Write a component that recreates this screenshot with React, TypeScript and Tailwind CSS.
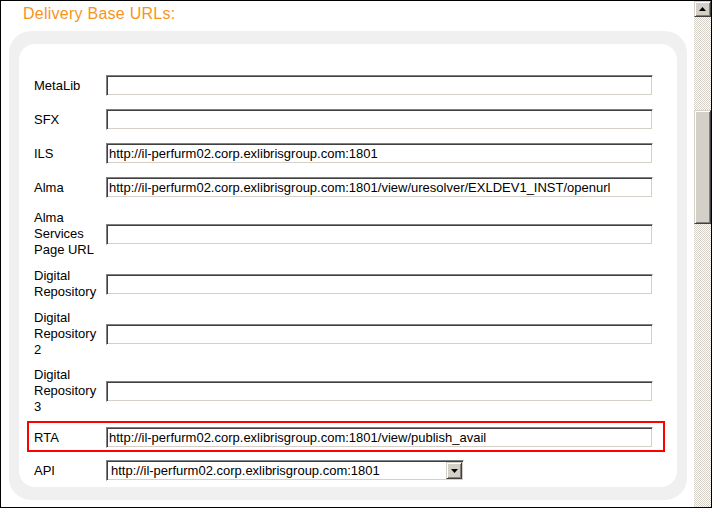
import React from 'react';

type Row = {
  label: string;
  value: string;
  highlight?: boolean;
  pad?: string;
};

const rows: Row[] = [
  { label: 'MetaLib', value: '' },
  { label: 'SFX', value: '' },
  { label: 'ILS', value: 'http://il-perfurm02.corp.exlibrisgroup.com:1801' },
  { label: 'Alma', value: 'http://il-perfurm02.corp.exlibrisgroup.com:1801/view/uresolver/EXLDEV1_INST/openurl' },
  { label: 'Alma Services Page URL', value: '', pad: 'pt-[2px] pb-[1px]' },
  { label: 'Digital Repository', value: '', pad: 'pt-[2px] pb-[1px]' },
  { label: 'Digital Repository 2', value: '', pad: 'pt-[2px] pb-[1px]' },
  { label: 'Digital Repository 3', value: '', pad: 'py-[1px]' },
  {
    label: 'RTA',
    value: 'http://il-perfurm02.corp.exlibrisgroup.com:1801/view/publish_avail',
    highlight: true,
    pad: 'pt-[4px] pb-[2px]',
  },
];

const inset =
  'h-[21px] border border-t-[#808080] border-l-[#808080] border-r-white border-b-white shadow-[inset_1px_1px_0_#404040,inset_-1px_-1px_0_#d4d0c8] bg-white';

const raised =
  'bg-[#d4d0c8] border border-t-[#d4d0c8] border-l-[#d4d0c8] border-r-[#404040] border-b-[#404040] shadow-[inset_1px_1px_0_#ffffff,inset_-1px_-1px_0_#808080]';

function FieldRow({ row }: { row: Row }) {
  return (
    <div
      className={`flex items-center border-2 ${row.pad ?? 'py-[3px]'} pl-[5px] pr-[10px] ${
        row.highlight ? 'border-[#ff0000]' : 'border-transparent'
      }`}
    >
      <div className="w-[68px] mr-[4px] leading-[16px]">{row.label}</div>
      <div className={`flex-1 ${inset} pl-[2px] leading-[19px] whitespace-nowrap overflow-hidden`}>{row.value}</div>
    </div>
  );
}

function Scrollbar() {
  return (
    <div className="w-[17px] flex flex-col bg-[image:repeating-conic-gradient(#d4d0c8_0%_25%,#ffffff_0%_50%)] bg-[length:2px_2px]">
      {/* up arrow */}
      <div className={`h-[16px] ${raised} flex items-center justify-center`}>
        <svg width="7" height="4" viewBox="0 0 7 4">
          <path d="M3.5 0 L7 4 L0 4 Z" fill="#000" />
        </svg>
      </div>
      <div className="h-[93px]" />
      {/* thumb */}
      <div className={`h-[114px] ${raised}`} />
    </div>
  );
}

export default function App() {
  return (
    <div
      className="w-[712px] h-[508px] border border-black flex overflow-hidden bg-white text-[13px] text-black"
      style={{ fontFamily: '"Liberation Sans", Arial, sans-serif' }}
    >
      <div className="flex-1 pt-[3px] overflow-hidden">
        <h2 className="pl-[22px] text-[16px] leading-[20px] tracking-[0.25px] text-[#f7941d]">Delivery Base URLs:</h2>

        <div className="mt-[7px] ml-[8px] mr-[7px] rounded-[22px] bg-[#f0f0f0] px-[10px] py-[13px]">
          <div className="rounded-[16px] bg-white pt-[26px] pb-[1px] pl-[8px] pr-[12px]">
            <div className="flex flex-col gap-[3px]">
              {rows.map((row) => (
                <FieldRow key={row.label} row={row} />
              ))}

              {/* API select */}
              <div className="flex items-center border-2 border-transparent py-[3px] pl-[5px] pr-[10px]">
                <div className="w-[68px] mr-[4px] leading-[16px]">API</div>
                <div className={`w-[358px] ${inset} flex items-center pl-[4px]`}>
                  <span className="flex-1 leading-[19px] whitespace-nowrap overflow-hidden">
                    http://il-perfurm02.corp.exlibrisgroup.com:1801
                  </span>
                  <div className={`w-[16px] h-[17px] mr-[1px] ${raised} flex items-center justify-center`}>
                    <svg width="7" height="4" viewBox="0 0 7 4">
                      <path d="M0 0 L7 0 L3.5 4 Z" fill="#000" />
                    </svg>
                  </div>
                </div>
              </div>
            </div>
          </div>
        </div>
      </div>
      <Scrollbar />
    </div>
  );
}
